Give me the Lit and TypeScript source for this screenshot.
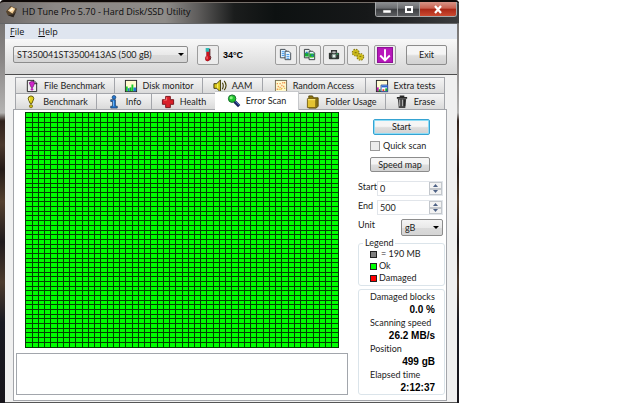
import { LitElement, html, svg, css } from "lit";
import { customElement, property, state } from "lit/decorators.js";
import { classMap } from "lit/directives/class-map.js";

const icons: Record<string, unknown> = {
  app: svg`<path d="M1 7 6 1l7 3-4 9-6-2z" fill="#57452f"/><path d="M3 6 7 2l4 2-3 5z" fill="#f4cf98"/><path d="M5 5l3-2 1 2-3 2z" fill="#fff3d8"/><path d="M3 11l6 2 3-6-3 3z" fill="#2b2420"/>`,
  thermo: svg`<path d="M6 1q1.500-1 3 0v7q2 2 0 5-2 2-4 0-1-3 1-5z" fill="#d3101c" stroke="#8d1a22" stroke-width=".6"/><path d="M5 0h4v4H5z" fill="#2fb9b4"/><path d="M9.500 1v7q2 2 0 5" fill="none" stroke="#56121a"/><path d="M6.500 9v3" stroke="#ff8d8d"/>`,
  copy: svg`<path d="M1.500 1.500h5l1 1v8h-6z" fill="#dff1ff" stroke="#414850"/><path d="M6.500 3.500h4l2 2v7h-6z" fill="#e6f5ff" stroke="#414850"/><path d="M3 4h3M3 6h3M3 8h3M8 7h3M8 9h3M8 11h3" stroke="#3e95e8"/>`,
  copyImage: svg`<path d="M1.500 1.500h5l1 1v8h-6z" fill="#e5f2ee" stroke="#34393c"/><path d="M6.500 3.500h4l2 2v7h-6z" fill="#e5f5ff" stroke="#34393c"/><path d="M2 5h4v4H2zM7 6h5v4H7z" fill="#14ad2e"/><path d="M3 4h2v2H3zM9 7h2v2H9z" fill="#2b77c7"/><path d="M7 10h4" stroke="#84dd41"/>`,
  camera: svg`<path d="M5 5V3h5v2" fill="none" stroke="#333" stroke-width="1.500"/><rect x="2" y="5" width="11" height="7" rx="1" fill="#303532"/><circle cx="7.500" cy="8.500" r="2.600" fill="#879a92"/><circle cx="7.500" cy="8.500" r="1.300" fill="#e5eee9"/><path d="M10 6h2v1h-2z" fill="#2dd26c"/>`,
  gears: svg`<circle cx="5" cy="5" r="3.200" fill="#c8b51c" stroke="#8a7c0c" stroke-dasharray="1.500 1" stroke-width="2"/><circle cx="10" cy="9.500" r="3.200" fill="#dcca26" stroke="#8a7c0c" stroke-dasharray="1.500 1" stroke-width="2"/><circle cx="5" cy="5" r="3" fill="#c9b71a"/><circle cx="10" cy="9.500" r="3" fill="#d0bf20"/><path d="M4 5h2M9 9h2" stroke="#776b0a"/>`,
  down: svg`<rect width="15" height="15" fill="#8e1196"/><rect x="1" y="1" width="13" height="13" fill="#b817bb"/><path d="M7.500 2v10M3 8l4.500 4.500L12 8" fill="none" stroke="#fff" stroke-width="1.800"/>`,
  fileBench: svg`<path d="M2.500 1.500h7l3 3v9h-10z" fill="#eee" stroke="#222"/><path d="M9 1v4h4" fill="none" stroke="#222"/><path d="M4.500 4q3-3 6 0L8.500 9h-2z" fill="#d024cb" stroke="#58105a" stroke-width=".6"/><circle cx="7.500" cy="11" r="1.400" fill="#c020bb"/>`,
  disk: svg`<rect x="1.500" y="1.500" width="12" height="12" fill="#fffbd0" stroke="#222"/><path d="M2 8h2v5H2zM8 6h2v7H8z" fill="#17cf26"/><path d="M4 10h2v3H4zM10 9h3v4h-3z" fill="#2077d0"/><path d="M6 9h2v4H6z" fill="#10ae32"/>`,
  speaker: svg`<path d="M1 5h3l4-4v13l-4-4H1z" fill="#d9c718" stroke="#3b3505"/><path d="M5 5v5" stroke="#fff581"/><path d="M10 4q2 3 0 7M12 2q4 5 0 10" fill="none" stroke="#484008" stroke-width="1.200"/>`,
  random: svg`<rect x="1.500" y="1.500" width="12" height="12" fill="#fff9cd" stroke="#756d52"/><path d="M3 11h1M4 8h1M6 9h1M8 7h1M10 8h1M11 4h1M6 5h1M9 4h1M3 5h1" stroke="#ec6d24" stroke-width="1.500"/><path d="M5 11h1M8 10h1M11 10h1M7 11h1" stroke="#dca92d" stroke-width="1.500"/>`,
  extra: svg`<rect x="1.500" y="1.500" width="12" height="12" fill="#fffbd5" stroke="#222"/><path d="M2 9h2v4H2z" fill="#c019ad"/><path d="M4 11h2v2H4z" fill="#17b928"/><path d="M6.500 6.500h7v7h-7z" fill="#fff" stroke="#2849a0"/><path d="M7 7h6v2H7z" fill="#2467d6"/><path d="M8 11h2v2H8z" fill="#e43c27"/><path d="M11 10h2v3h-2z" fill="#15ad35"/>`,
  bench: svg`<path d="M4.500 4q0-3 3-3t3 3L8.500 9h-2z" fill="#e1cf1d" stroke="#5e550a"/><path d="M6 3v3" stroke="#fff681"/><circle cx="7.500" cy="12" r="1.700" fill="#cdbb18" stroke="#5e550a" stroke-width=".7"/>`,
  info: svg`<circle cx="7.500" cy="2.500" r="2" fill="#2478cf" stroke="#113967" stroke-width=".7"/><path d="M4 5h5v7h2v2H4v-2h2V7H4z" fill="#2377d0" stroke="#102c55" stroke-width=".7"/><path d="M7 6v6" stroke="#72bcff"/>`,
  health: svg`<path d="M5 1.500h5V5h3.500v5H10v3.500H5V10H1.500V5H5z" fill="#d9202a" stroke="#771018"/><path d="M6 2.500v3H3" fill="none" stroke="#ff7474"/>`,
  scan: svg`<path d="m8 8 5 5" stroke="#19255e" stroke-width="3.500"/><path d="m8 7 5 5" stroke="#496ed1"/><circle cx="5.500" cy="5" r="4" fill="#20c42e" stroke="#13652b"/><circle cx="4.500" cy="4" r="1.700" fill="#87f27f"/>`,
  folder: svg`<path d="M3 3V1h4l1 2h5v9l-2 2H3z" fill="#8e7510" stroke="#584708"/><path d="M1.500 4h9v9.500h-9z" fill="#e4c331" stroke="#766010"/><path d="M2 5h8" stroke="#fff08b"/>`,
  erase: svg`<path d="M2 3h11M5 1.500h5" stroke="#292929" stroke-width="1.800"/><path d="M3 4h9l-1 10H4z" fill="#464646"/><path d="M5 5v7M8 5v7" stroke="#b9b9b9"/><path d="M10.500 5v7" stroke="#161616"/>`,
};

const icon = (name: string) => html`<svg class="icon" viewBox="0 0 15 15" aria-hidden="true">${icons[name]}</svg>`;

const shared = css`
  * { box-sizing: border-box; }
  button, input, select, textarea { font: inherit; color: inherit; margin: 0; padding: 0; border-radius: 0; outline: 0; }
  .icon { width: 14px; height: 14px; flex: none; display: block; }
  .push {
    display: flex; align-items: center; justify-content: center;
    border: 1px solid #8c8c8c; border-radius: 2px;
    background: linear-gradient(#f5f5f5 45%, #dddddd 55%, #d2d2d2);
  }
  .combo { position: relative; display: flex; }
  .combo select {
    appearance: none; width: 100%; height: 17px; padding: 0 3px;
    border: 1px solid #8c8c8c; border-radius: 2px;
    background: linear-gradient(#f4f4f4, #e9e9e9 50%, #dadada 52%, #d5d5d5);
  }
  .combo::after {
    content: ""; position: absolute; right: 4px; top: 7px; pointer-events: none;
    border: 3px solid transparent; border-top-color: #000; border-bottom: 0;
  }
`;

@customElement("block-map")
class BlockMap extends LitElement {
  @property({ type: Number }) columns = 50;
  @property({ type: Number }) rows = 50;

  static styles = css`
    :host { display: block; }
    svg { display: block; width: 100%; height: 236px; background: #00ff00; border: 1px solid #043c04; box-sizing: border-box; }
    path { fill: none; stroke: #034003; stroke-width: 1px; vector-effect: non-scaling-stroke; }
  `;

  render() {
    let d = "";
    for (let c = 1; c < this.columns; c++) d += `M${c} 0V${this.rows}`;
    for (let r = 1; r < this.rows; r++) d += `M0 ${r}H${this.columns}`;
    return html`<svg viewBox="0 0 ${this.columns} ${this.rows}" preserveAspectRatio="none"
      shape-rendering="crispEdges" role="img" aria-label="Block map"><path d=${d}></path></svg>`;
  }
}

@customElement("number-field")
class NumberField extends LitElement {
  @property() label = "";
  @property({ type: Number }) value = 0;

  static styles = [shared, css`
    :host { display: block; }
    .row { display: grid; grid-template-columns: 19px minmax(0, 1fr); height: 15px; }
    .box { display: flex; border: 1px solid #e1e5ea; padding-left: 2px; align-items: center; }
    input { flex: 1; width: 0; min-width: 0; border: 0; background: none; appearance: textfield; height: 13px; }
    input::-webkit-inner-spin-button { display: none; }
    .spin { display: grid; width: 13px; height: 13px; }
    .spin button { border: 1px solid #c3c7cc; background: #f3f3f3; display: grid; place-items: center; }
    .spin svg { width: 5px; height: 3px; fill: #4d6185; display: block; }
  `];

  render() {
    return html`<div class="row">
      <label for="n">${this.label}</label>
      <div class="box">
        <input id="n" type="number" .value=${String(this.value)}>
        <div class="spin">
          <button aria-label="Increase" @click=${() => this.value++}><svg viewBox="0 0 5 3"><path d="M0 3 2.500 0 5 3z"/></svg></button>
          <button aria-label="Decrease" @click=${() => this.value--}><svg viewBox="0 0 5 3"><path d="M0 0h5L2.500 3z"/></svg></button>
        </div>
      </div>
    </div>`;
  }
}

@customElement("app-root")
class AppRoot extends LitElement {
  @state() private tab = "Error Scan";

  private backTabs = [["File Benchmark", "fileBench"], ["Disk monitor", "disk"], ["AAM", "speaker"], ["Random Access", "random"], ["Extra tests", "extra"]];
  private frontTabs = [["Benchmark", "bench"], ["Info", "info"], ["Health", "health"], ["Error Scan", "scan"], ["Folder Usage", "folder"], ["Erase", "erase"]];
  private tools = [["copy", "Copy text"], ["copyImage", "Copy image"], ["camera", "Screenshot"], ["gears", "Options"]];
  private stats = [["Damaged blocks", "0.0 %"], ["Scanning speed", "26.2 MB/s"], ["Position", "499 gB"], ["Elapsed time", "2:12:37"]];

  static styles = [shared, css`
    :host {
      display: block; min-height: 100vh; background: #fff; color: #1c1c1c;
      font: 9px/12px Lato, "Liberation Sans", sans-serif; font-variant-ligatures: none;
    }
    .window {
      margin-right: 181px; min-height: 100vh; padding: 0 2px 0 5px; display: flex; flex-direction: column;
      background: linear-gradient(#6c6a69, #8a8786 15%, #b4b3b2 28%, #2f211b 30%, #4a382d 36%, #241a17 42%, #54402f 50%, #1f1a1c 60%, #4c3b2e 70%, #191a22 80%, #17151b);
      border-radius: 4px 4px 0 0;
    }
    .title {
      display: flex; align-items: flex-start; height: 24px; margin: 0 -2px 0 -5px; padding: 0 2px 0 5px;
      border-top: 2px solid #0d0807; border-radius: 4px 4px 0 0;
      background: linear-gradient(90deg, #6e6a69, #8c8886 12%, #8e8b88 36%, #5f5d5c 43%, #1b1d1d 51%, #0d1111 60%, #161819 80%, #3b3c3e);
      box-shadow: inset 0 1px #77706b, inset 0 -1px #646567;
    }
    .title h1 { display: flex; gap: 3px; align-items: center; flex: 1; margin: 0; height: 20px; font: 9px/14px "Open Sans", "Noto Sans", sans-serif; color: #0c0c0c; }
    .caption { display: flex; height: 15px; border: 1px solid #a7a9ab; border-top: 0; border-radius: 0 0 3px 3px; overflow: hidden; }
    .caption button { border: 0; width: 22px; display: grid; place-items: center; background: linear-gradient(#8e9092, #6a6c6f 45%, #3b3d40 50%, #5c5e61); border-right: 1px solid #9b9d9f; }
    .caption .close { width: 36px; border: 0; background: linear-gradient(#d79487, #c9604f 45%, #a92616 50%, #cc4a31); }
    .caption svg { width: 10px; height: 9px; display: block; }
    .menu { display: flex; gap: 14px; height: 15px; padding: 0 5px; background: #dfe5ef; font: 9px/15px "Open Sans", "Noto Sans", sans-serif; }
    .menu a { color: #111; text-decoration: none; }
    .toolbar {
      display: flex; align-items: center; gap: 2px; height: 36px; padding: 0 10px 4px 8px;
      border-bottom: 1px solid #4d4d4d; background: linear-gradient(#f8f8f8, #ececec 35%, #d5d5d5);
    }
    .drive { width: 175px; margin-right: 7px; }
    .tool { width: 22px; height: 20px; background: #ececec; border-color: #9c9c9c; }
    .temp { flex: 1; font: 700 9px/12px "Liberation Sans", sans-serif; padding-left: 2px; color: #000; }
    .update { margin-left: 3px; }
    .update .icon { width: 16px; height: 16px; }
    .exit { width: 41px; height: 20px; margin-left: 8px; }
    .body { flex: 1; display: flex; flex-direction: column; padding: 2px 10px 1px 8px; background: #f0f0f0; border-bottom: 1px solid #555; }
    .tabs { display: grid; height: 16px; margin: 0 2px; }
    .back { grid-template-columns: 100fr 88fr 60fr 103fr 79fr; }
    .front { grid-template-columns: 82fr 55fr 64fr 82fr 88fr 59fr; }
    .tab {
      display: flex; align-items: center; justify-content: center; gap: 5px; min-width: 0; white-space: nowrap;
      border: 1px solid #a3a5aa; border-width: 1px 1px 0 0; background: linear-gradient(#f4f4f4, #e8e8e8 50%, #dadada);
    }
    .tab:first-child { border-left-width: 1px; }
    .active { background: #fff; margin: -2px -1px -1px; z-index: 1; border-color: #c6c8cb; }
    .pane { flex: 1; display: grid; grid-template-columns: minmax(0, 1fr) 87px; gap: 10px; padding: 2px 1px 5px 2px; background: #fff; border: 1px solid #a3a5aa; }
    .work { display: flex; flex-direction: column; gap: 5px; }
    block-map { margin: 0 9px; }
    .log { flex: 1; width: 100%; min-height: 42px; resize: none; border: 1px solid #a2a6ac; background: #fff; display: block; }
    .side { display: flex; flex-direction: column; white-space: nowrap; }
    .actions { display: flex; flex-direction: column; gap: 6px; padding: 7px 15px 0 12px; }
    .start { height: 16px; margin-left: 3px; border-color: #35a3d2; box-shadow: inset 0 0 0 1px #8ddcf6; }
    .speed { height: 15px; }
    .check { display: flex; align-items: center; gap: 3px; height: 10px; }
    .check input { appearance: none; width: 10px; height: 10px; border: 1px solid #999; background: #ececec; }
    .check input:checked { background: #4b7fb5; }
    .fields { display: flex; flex-direction: column; gap: 4px; padding: 9px 2px 0 0; }
    .unit { display: flex; justify-content: space-between; }
    .unit .combo { width: 42px; }
    fieldset { border: 1px solid #dbe4ea; border-radius: 3px; margin: 0; min-width: 0; }
    .legend { margin-top: 2px; padding: 0 0 1px 11px; }
    .legend legend { margin-left: -7px; padding: 0 2px; line-height: 10px; }
    .legend ul { list-style: none; margin: 0; padding: 0; }
    .legend li { display: flex; align-items: center; gap: 2px; line-height: 12px; }
    .swatch { width: 7px; height: 7px; border: 1px solid #222; background: #00ff00; }
    .size { background: #808080; margin-right: 2px; }
    .damaged { background: #ff0000; }
    .stats { margin: 3px 0 0; padding: 0 9px 0 11px; border: 1px solid #dbe4ea; border-radius: 3px; flex: 1; }
    .stats dt { line-height: 13px; }
    .stats dd { margin: 0; text-align: right; font: 700 10px/13px "Liberation Sans", sans-serif; color: #000; }
  `];

  private renderTab([name, glyph]: string[]) {
    return html`<button role="tab" aria-selected=${this.tab === name ? "true" : "false"}
      class=${classMap({ tab: true, active: this.tab === name })}
      @click=${() => (this.tab = name)}>${icon(glyph)}<span>${name}</span></button>`;
  }

  render() {
    return html`<main class="window">
      <header class="title">
        <h1>${icon("app")}<span>HD Tune Pro 5.70 - Hard Disk/SSD Utility</span></h1>
        <div class="caption">
          <button aria-label="Minimize"><svg viewBox="0 0 10 9"><path d="M1 5h8v3H1z" fill="#fff" stroke="#555" stroke-width=".5"/></svg></button>
          <button aria-label="Maximize"><svg viewBox="0 0 10 9"><path d="M2 2h6v5H2z" fill="none" stroke="#fff" stroke-width="2"/></svg></button>
          <button class="close" aria-label="Close"><svg viewBox="0 0 10 9"><path d="m2 1 6 7M8 1 2 8" stroke="#fff" stroke-width="2.200"/></svg></button>
        </div>
      </header>
      <nav class="menu"><a href="#file"><u>F</u>ile</a><a href="#help"><u>H</u>elp</a></nav>
      <div class="toolbar">
        <div class="combo drive"><select aria-label="Drive"><option>ST350041ST3500413AS (500 gB)</option></select></div>
        <button class="push tool" aria-label="Temperature">${icon("thermo")}</button>
        <output class="temp">34°C</output>
        ${this.tools.map(([glyph, label]) => html`<button class="push tool" aria-label=${label}>${icon(glyph)}</button>`)}
        <button class="push tool update" aria-label="Minimize to tray">${icon("down")}</button>
        <button class="push exit">Exit</button>
      </div>
      <div class="body">
        <div class="tabs back" role="tablist">${this.backTabs.map((t) => this.renderTab(t))}</div>
        <div class="tabs front" role="tablist">${this.frontTabs.map((t) => this.renderTab(t))}</div>
        <section class="pane">
          <div class="work">
            <block-map></block-map>
            <textarea class="log" readonly aria-label="Log"></textarea>
          </div>
          <div class="side">
            <div class="actions">
              <button class="push start">Start</button>
              <label class="check"><input type="checkbox">Quick scan</label>
              <button class="push speed">Speed map</button>
            </div>
            <div class="fields">
              <number-field label="Start" .value=${0}></number-field>
              <number-field label="End" .value=${500}></number-field>
              <div class="unit"><label for="unit">Unit</label>
                <div class="combo"><select id="unit"><option>gB</option></select></div></div>
            </div>
            <fieldset class="legend"><legend>Legend</legend>
              <ul>
                <li><i class="swatch size"></i>= 190 MB</li>
                <li><i class="swatch"></i>Ok</li>
                <li><i class="swatch damaged"></i>Damaged</li>
              </ul>
            </fieldset>
            <dl class="stats">${this.stats.map(([k, v]) => html`<dt>${k}</dt><dd>${v}</dd>`)}</dl>
          </div>
        </section>
      </div>
    </main>`;
  }
}
